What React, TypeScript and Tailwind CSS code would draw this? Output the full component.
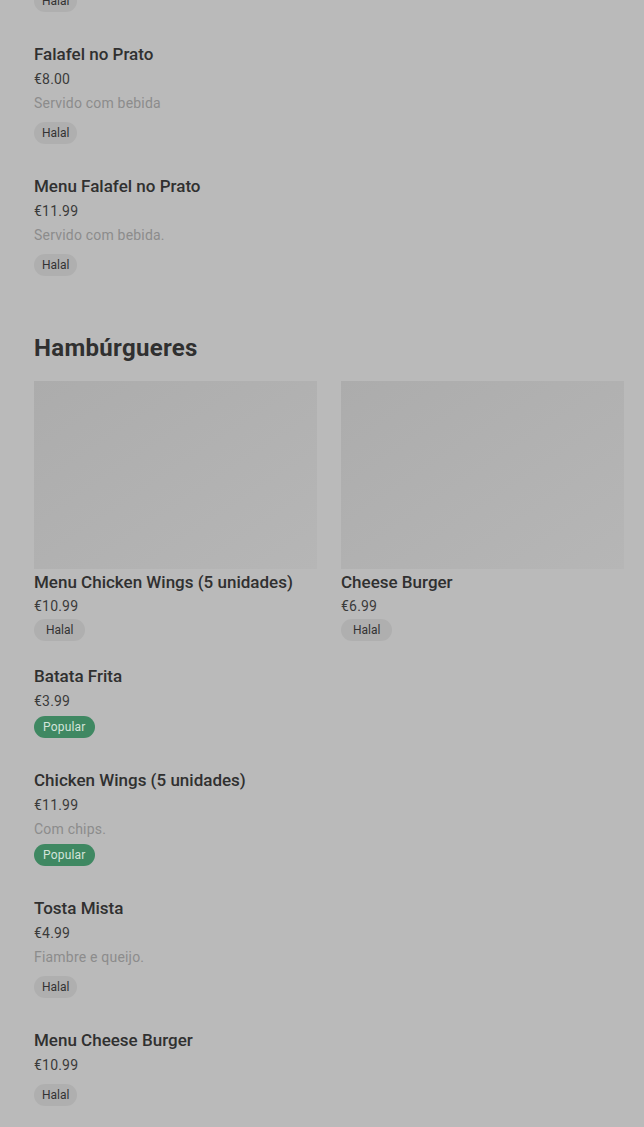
import React from 'react';

type Item = {
  name: string;
  price: string;
  desc?: string;
  tag: 'Halal' | 'Popular';
};

const before: Item[] = [
  { name: 'Falafel no Pão', price: '€6.50', desc: 'Servido com bebida', tag: 'Halal' },
  { name: 'Falafel no Prato', price: '€8.00', desc: 'Servido com bebida', tag: 'Halal' },
  { name: 'Menu Falafel no Prato', price: '€11.99', desc: 'Servido com bebida.', tag: 'Halal' },
];

const featured: Item[] = [
  { name: 'Menu Chicken Wings (5 unidades)', price: '€10.99', tag: 'Halal' },
  { name: 'Cheese Burger', price: '€6.99', tag: 'Halal' },
];

const burgers: Item[] = [
  { name: 'Batata Frita', price: '€3.99', tag: 'Popular' },
  { name: 'Chicken Wings (5 unidades)', price: '€11.99', desc: 'Com chips.', tag: 'Popular' },
  { name: 'Tosta Mista', price: '€4.99', desc: 'Fiambre e queijo.', tag: 'Halal' },
  { name: 'Menu Cheese Burger', price: '€10.99', tag: 'Halal' },
];

function Tag({ tag, wide }: { tag: Item['tag']; wide?: boolean }) {
  if (tag === 'Popular') {
    return (
      <span className="mt-[3px] inline-flex h-[22px] items-center self-start rounded-full bg-[#3f8862] px-[9px] text-[12px] tracking-[0.2px] text-[#d3e4da]">
        Popular
      </span>
    );
  }
  return (
    <span
      className={`inline-flex h-[22px] items-center self-start rounded-full bg-[#afafaf] text-[12px] text-[#333333] ${
        wide ? 'mt-[2px] px-3' : 'mt-[7px] px-2'
      }`}
    >
      Halal
    </span>
  );
}

function MenuRow({ item }: { item: Item }) {
  return (
    <div className="flex flex-col">
      <p className="text-[17px] leading-[26px] font-medium text-[#303030]">{item.name}</p>
      <p className="text-[14px] leading-[24px] tracking-[0.2px] text-[#3a3a3a]">{item.price}</p>
      {item.desc && (
        <p className="text-[14px] leading-[24px] tracking-[0.2px] text-[#8c8c8c]">{item.desc}</p>
      )}
      <Tag tag={item.tag} />
    </div>
  );
}

function FeaturedCard({ item }: { item: Item }) {
  return (
    <div className="flex flex-col">
      <div className="h-[188px] w-full bg-gradient-to-br from-[#acacac] via-[#b1b1b1] to-[#b6b6b6]" />
      <p className="text-[17px] leading-[26px] font-medium text-[#303030]">{item.name}</p>
      <p className="text-[14px] leading-[22px] tracking-[0.2px] text-[#3a3a3a]">{item.price}</p>
      <Tag tag={item.tag} wide />
    </div>
  );
}

export default function App() {
  return (
    <div
      className="h-[1127px] w-[644px] overflow-hidden bg-[#bababa]"
      style={{ fontFamily: 'Roboto, "Noto Sans", sans-serif' }}
    >
      <div className="-mt-[91px] pl-[34px] pr-[20px]">
        <div className="flex flex-col gap-[29px]">
          {before.map((item) => (
            <MenuRow key={item.name} item={item} />
          ))}
        </div>

        <h2 className="mt-[56px] text-[24px] leading-[32px] font-bold tracking-[0.3px] text-[#303030]">
          Hambúrgueres
        </h2>

        <div className="mt-[17px] grid grid-cols-2 gap-x-[24px]">
          {featured.map((item) => (
            <FeaturedCard key={item.name} item={item} />
          ))}
        </div>

        <div className="mt-[22px] flex flex-col gap-[29px]">
          {burgers.map((item) => (
            <MenuRow key={item.name} item={item} />
          ))}
        </div>
      </div>
    </div>
  );
}
